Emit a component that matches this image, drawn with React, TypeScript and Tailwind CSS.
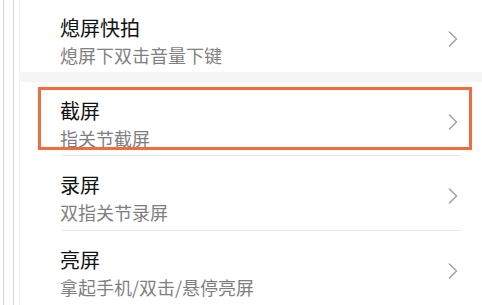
import React from "react";

const Chevron = () => (
  <svg width="10" height="16" viewBox="0 0 10 16" fill="none" className="shrink-0">
    <polyline points="1.5,1 8.5,8 1.5,15" stroke="#a3a3a3" strokeWidth="1.6" strokeLinecap="round" strokeLinejoin="round" />
  </svg>
);

type RowProps = { title: string; sub: string; h: string; pt: string; highlight?: boolean };

const Row = ({ title, sub, h, pt, highlight }: RowProps) => (
  <div className={`relative flex items-start ${h} ${pt} pl-[40px] pr-[24px]`}>
    <div className="flex-1 flex flex-col">
      <div className="text-[20px] leading-[26px] text-[#111111]">{title}</div>
      <div className="mt-[2px] text-[18px] leading-[24px] text-[#7f7f7f] whitespace-nowrap">{sub}</div>
    </div>
    <div className="mt-[16px]">
      <Chevron />
    </div>
    {highlight && (
      <div className="absolute left-[18px] top-[5px] w-[434px] h-[63px] border-[3px] border-[#f26d3d] pointer-events-none" />
    )}
  </div>
);

const Divider = () => (
  <div className="h-px ml-[41px] mr-[21px] bg-[#e9e9e9]" />
);

export default function App() {
  return (
    <div
      className="w-[482px] h-[305px] overflow-hidden bg-white flex"
      style={{ fontFamily: '"Noto Sans CJK SC", "Noto Sans", sans-serif' }}
    >
      <div className="w-[20px] shrink-0 flex">
        <div className="ml-[3px] w-px bg-[#d4d4d4]" />
        <div className="ml-[9px] w-px bg-[#d4d4d4]" />
        <div className="ml-[6px] w-px bg-[#f3f3f3]" />
      </div>
      <div className="flex-1 flex flex-col">
        <Row title="熄屏快拍" sub="熄屏下双击音量下键" h="h-[78px]" pt="pt-[15px]" />
        <div className="h-[11px] bg-[#f5f5f5]" />
        <Row title="截屏" sub="指关节截屏" h="h-[79px]" pt="pt-[16px]" highlight />
        <Divider />
        <Row title="录屏" sub="双指关节录屏" h="h-[80px]" pt="pt-[16px]" />
        <Divider />
        <Row title="亮屏" sub="拿起手机/双击/悬停亮屏" h="h-[80px]" pt="pt-[16px]" />
      </div>
    </div>
  );
}
